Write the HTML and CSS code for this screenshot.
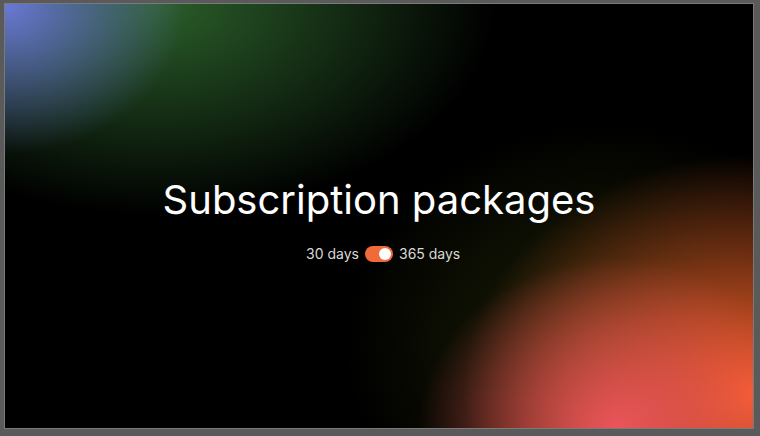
FILE: index.html
```html
<!DOCTYPE html>
<html>
<head>
<meta charset="utf-8">
<link rel="stylesheet" href="styles.css">
</head>
<body>
<div class="frame">
  <div class="screen">
    <h1 class="title">Subscription packages</h1>
    <div class="period">
      <span class="label left">30 days</span>
      <span class="toggle"><span class="knob"></span></span>
      <span class="label">365 days</span>
    </div>
  </div>
</div>
</body>
</html>
```
FILE: styles.css
```css
html, body {
  margin: 0;
  padding: 0;
  width: 760px;
  height: 436px;
  overflow: hidden;
  background: #5c5c5c;
}
.frame {
  box-sizing: border-box;
  width: 760px;
  height: 436px;
  padding: 4px 7px 8px 5px;
  background: #5a5a5a;
}
.screen {
  position: relative;
  width: 100%;
  height: 100%;
  box-shadow: 0 0 0 1px #7a7a7a;
  background:
    radial-gradient(ellipse 180px 150px at 0% 0%, rgba(110,125,225,0.95), rgba(110,125,220,0) 100%),
    radial-gradient(ellipse 340px 210px at 20% 0%, rgba(45,100,45,0.95), rgba(45,100,45,0) 100%),
    radial-gradient(ellipse 200px 170px at 82% 100%, rgba(235,85,90,1), rgba(235,85,90,0) 100%),
    radial-gradient(ellipse 290px 240px at 100% 92%, rgba(248,95,40,1), rgba(248,95,40,0) 100%),
    radial-gradient(ellipse 260px 220px at 80% 80%, rgba(50,55,10,0.6), rgba(50,55,10,0) 100%),
    #000;
  display: flex;
  flex-direction: column;
  align-items: center;
  font-family: Inter, "Liberation Sans", sans-serif;
  color: #fff;
}
.title {
  margin: 172px 0 0;
  font-size: 40px;
  font-weight: 400;
  letter-spacing: 0;
  line-height: 48px;
}
.period {
  margin-top: 21px;
  width: 100%;
  display: grid;
  grid-template-columns: 1fr auto 1fr;
  align-items: center;
  column-gap: 6px;
  font-size: 14px;
  color: #d8d8d8;
}
.left {
  justify-self: end;
}
.toggle {
  width: 28px;
  height: 16px;
  border-radius: 8px;
  background: #f06a3a;
  display: flex;
  align-items: center;
  justify-content: flex-end;
  padding: 0 2px;
  box-sizing: border-box;
}
.knob {
  width: 12px;
  height: 12px;
  border-radius: 50%;
  background: #fff;
}
```
